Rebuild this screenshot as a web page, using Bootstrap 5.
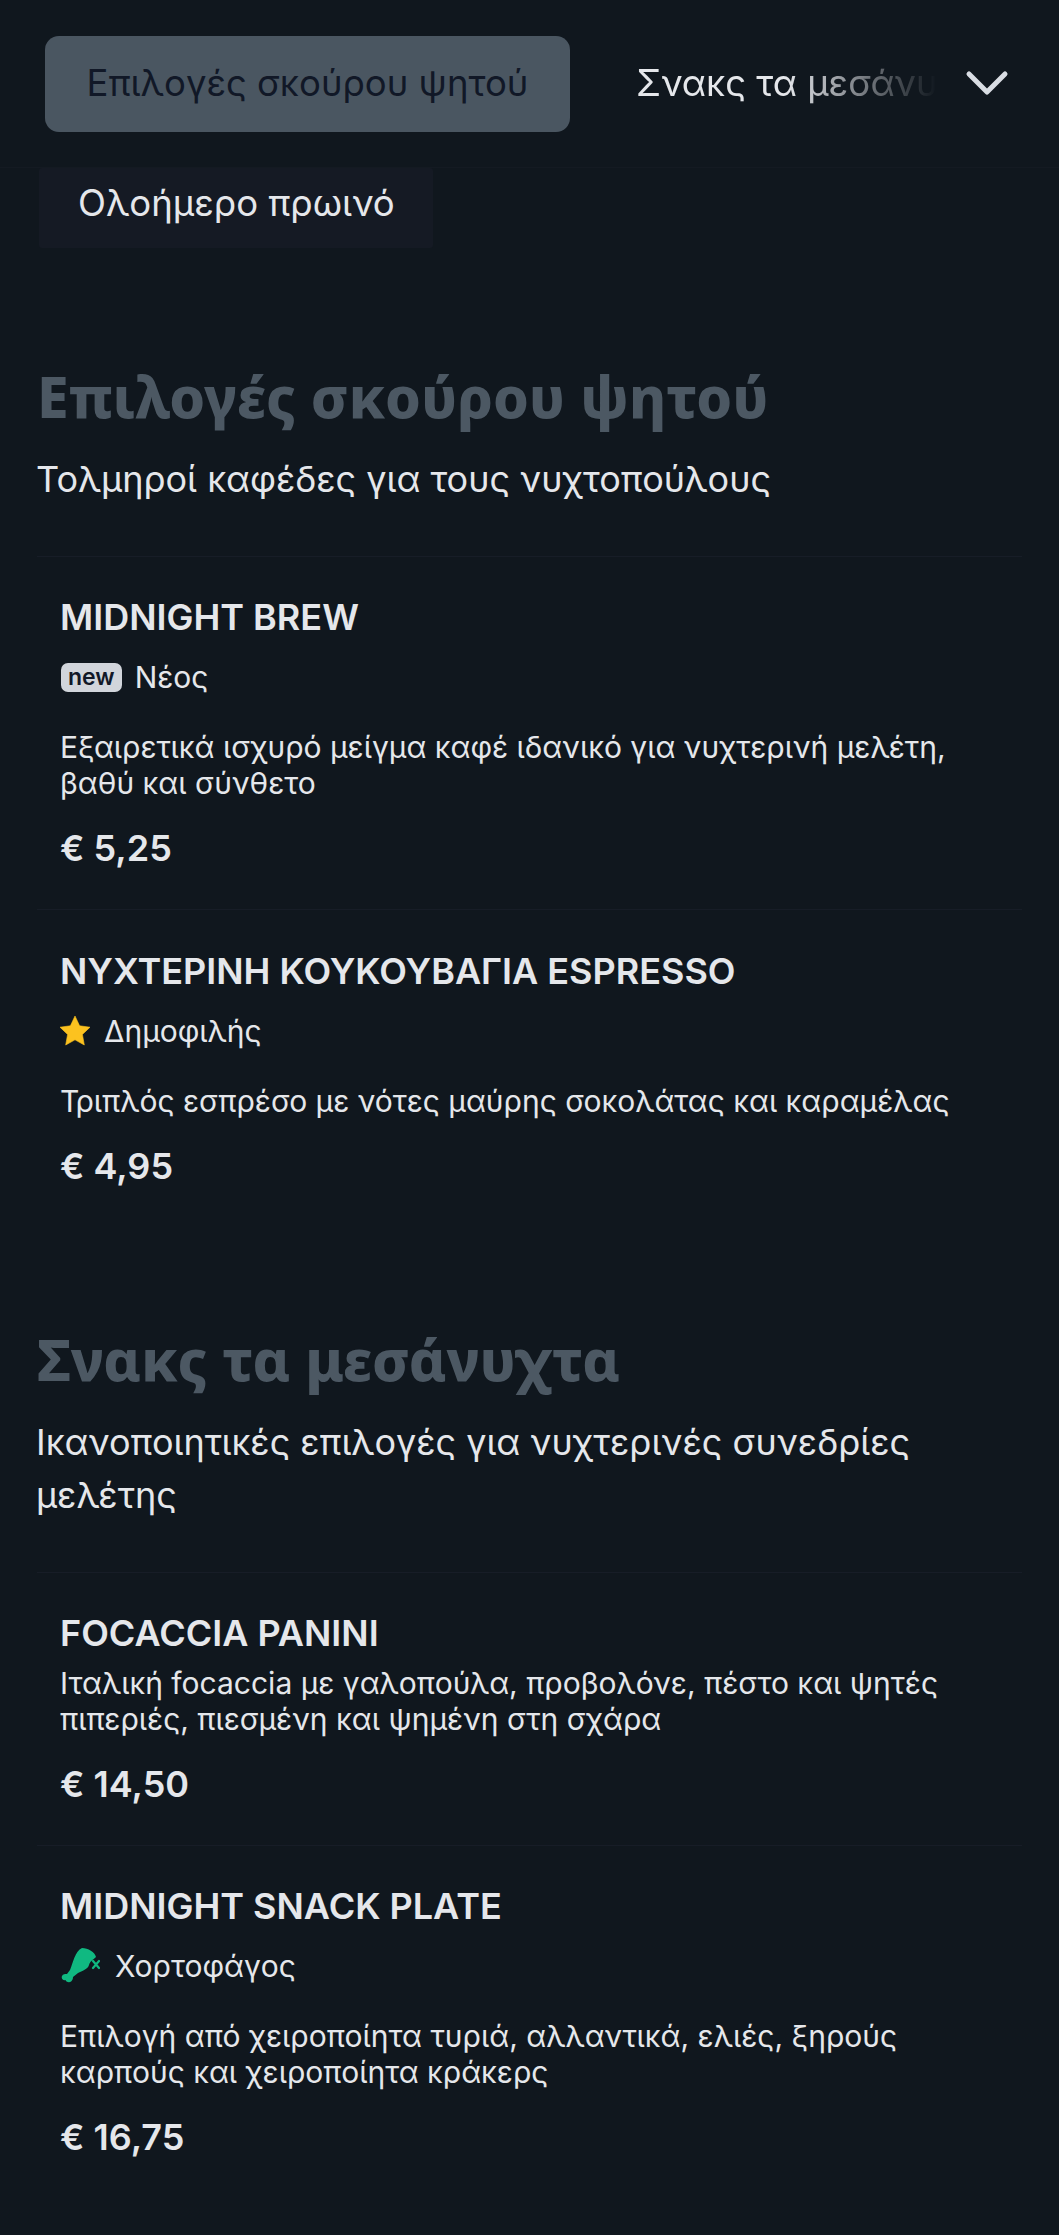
<!DOCTYPE html>
<html lang="el"><head><meta charset="utf-8">
<link href="https://cdn.jsdelivr.net/npm/bootstrap@5.3.0/dist/css/bootstrap.min.css" rel="stylesheet">
<style>
html,body{background:#10171e;margin:0}
body{font-family:Inter,"Noto Sans",sans-serif;color:#e5e7eb;width:1059px;height:2235px;overflow:hidden}
.topbar{height:168px;padding:36px 45px 0;border-bottom:1px solid #141a22}
.tab-on{width:525px;height:96px;background:#4a5661;border-radius:14px;color:#111827;font-size:36.5px;line-height:94px;text-align:center}
.tab-off{width:301px;margin-left:66px;font-size:36.5px;line-height:94px;white-space:nowrap;overflow:hidden;color:#e5e7eb;-webkit-mask-image:linear-gradient(90deg,#000 50%,transparent 100%);mask-image:linear-gradient(90deg,#000 50%,transparent 100%)}
.chev{margin-left:28px;margin-top:33px}
.tab-sub{margin-left:39px;width:394px;height:80px;background:#151a24;font-size:36.5px;line-height:70px;padding-left:39px;border-radius:3px}
.sec-h{font-family:"Noto Sans",sans-serif;font-weight:800;font-size:57px;line-height:80px;color:#4c5863;margin:0}
.sec-s{font-size:36px;line-height:53px;margin:17px 0 0 -1px}
.sect{padding:0 37px}
.sect-a{margin-top:108px}
.sect-b{margin-top:92px}
.menu-list{margin-top:50px}
.item{padding:38px 24px 39px 23px;border-top:1px solid #171d27}
.item-b{padding-top:39px}
.i-t{font-size:36px;font-weight:600;line-height:44px;color:#e5e7eb}
.i-b{font-size:30px;line-height:44px;display:flex;align-items:center;margin-top:16px}
.i-d{font-size:30px;line-height:36px;margin-top:30px}
.i-d-tight{margin-top:10px}
.i-p{font-size:36px;font-weight:600;line-height:44px;margin-top:25px}
.tagnew{background:#d1d5db;color:#111827;font-size:23px;font-weight:600;line-height:29px;padding:0 7px;border-radius:7px;margin:0 13px 0 1px}
.ic-star{margin:0 13px 0 -1px}
.ic-leg{margin-right:15px}
</style></head><body>
<div class="topbar d-flex">
<div class="tab-on">Επιλογές σκούρου ψητού</div>
<div class="tab-off">Σνακς τα μεσάνυχτα</div>
<svg class="chev" width="44" height="30" viewBox="0 0 44 30"><path d="M4 5 L22 23 L40 5" fill="none" stroke="#d9dde3" stroke-width="5" stroke-linecap="round" stroke-linejoin="round"/></svg>
</div>
<div class="tab-sub">Ολοήμερο πρωινό</div>
<section class="sect sect-a">
<h2 class="sec-h">Επιλογές σκούρου ψητού</h2>
<p class="sec-s">Τολμηροί καφέδες για τους νυχτοπούλους</p>
<div class="menu-list">
<div class="item">
<div class="i-t">MIDNIGHT BREW</div>
<div class="i-b"><span class="tagnew">new</span>Νέος</div>
<div class="i-d">Εξαιρετικά ισχυρό μείγμα καφέ ιδανικό για νυχτερινή μελέτη, βαθύ και σύνθετο</div>
<div class="i-p">€ 5,25</div>
</div>
<div class="item item-b">
<div class="i-t">ΝΥΧΤΕΡΙΝΗ ΚΟΥΚΟΥΒΑΓΙΑ ESPRESSO</div>
<div class="i-b"><svg class="ic-star" width="32" height="32" viewBox="0 0 32 32"><path d="M16 1 L20.6 10.8 L31 12.2 L23.4 19.4 L25.3 30 L16 24.8 L6.7 30 L8.6 19.4 L1 12.2 L11.4 10.8 Z" fill="#fcc21f" stroke="#fcc21f" stroke-width=".6" stroke-linejoin="round"/></svg>Δημοφιλής</div>
<div class="i-d">Τριπλός εσπρέσο με νότες μαύρης σοκολάτας και καραμέλας</div>
<div class="i-p">€ 4,95</div>
</div>
</div>
</section>
<section class="sect sect-b">
<h2 class="sec-h">Σνακς τα μεσάνυχτα</h2>
<p class="sec-s">Ικανοποιητικές επιλογές για νυχτερινές συνεδρίες μελέτης</p>
<div class="menu-list">
<div class="item">
<div class="i-t">FOCACCIA PANINI</div>
<div class="i-d i-d-tight">Ιταλική focaccia με γαλοπούλα, προβολόνε, πέστο και ψητές πιπεριές, πιεσμένη και ψημένη στη σχάρα</div>
<div class="i-p">€ 14,50</div>
</div>
<div class="item">
<div class="i-t">MIDNIGHT SNACK PLATE</div>
<div class="i-b"><svg class="ic-leg" width="40" height="38" viewBox="0 0 40 38"><path d="M22 1 C28 1 35 5 36 10 C33 13 30 14 29 18 C28 22 22 24 18 26 L13 30 C13 33 11 36 8 35 C6 35 6 33 5 33 C3 34 1 31 2 29 C3 27 5 27 7 27 L10 23 C13 16 15 4 22 1Z" fill="#10b981"/><path d="M33 14 L39 21 M39 14 L33 21" stroke="#10b981" stroke-width="2.2" stroke-linecap="round"/></svg>Χορτοφάγος</div>
<div class="i-d">Επιλογή από χειροποίητα τυριά, αλλαντικά, ελιές, ξηρούς καρπούς και χειροποίητα κράκερς</div>
<div class="i-p">€ 16,75</div>
</div>
</div>
</section>
</body></html>
